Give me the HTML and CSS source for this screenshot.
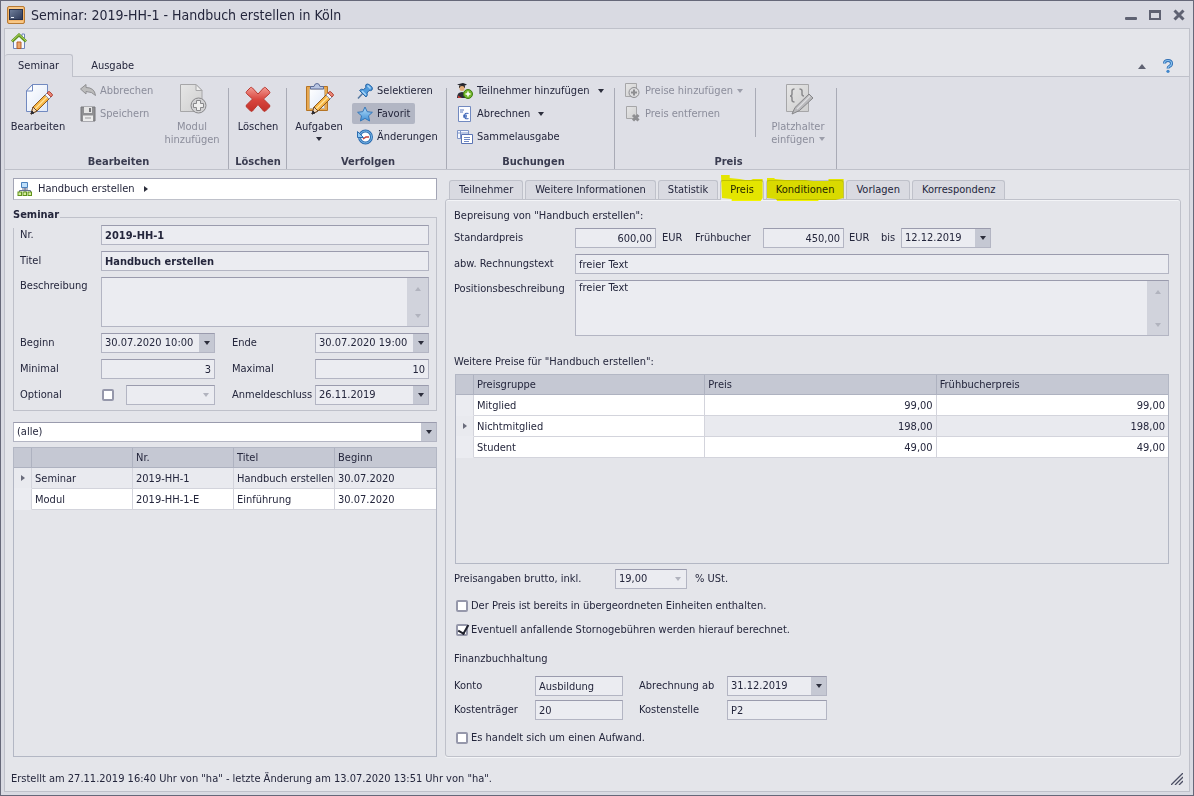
FILE: index.html
```html
<!DOCTYPE html>
<html lang="de">
<head>
<meta charset="utf-8">
<title>Seminar: 2019-HH-1 - Handbuch erstellen in Köln</title>
<link rel="stylesheet" href="styles.css">
</head>
<body>
<svg class="defs" aria-hidden="true">
  <defs>
    <linearGradient id="paper" x1="0" y1="0" x2="1" y2="1"><stop offset="0" stop-color="#fff"/><stop offset="1" stop-color="#dfe8f8"/></linearGradient>
    <linearGradient id="grey" x1="0" y1="0" x2="1" y2="1"><stop offset="0" stop-color="#e6e6e6"/><stop offset="1" stop-color="#cfcfcf"/></linearGradient>
    <linearGradient id="red" x1="0" y1="0" x2="0" y2="1"><stop offset="0" stop-color="#f29a92"/><stop offset=".5" stop-color="#d9473f"/><stop offset="1" stop-color="#c23029"/></linearGradient>
    <linearGradient id="blue" x1="0" y1="0" x2="0" y2="1"><stop offset="0" stop-color="#b5defa"/><stop offset="1" stop-color="#3f8fd6"/></linearGradient>
    <linearGradient id="navy" x1="0" y1="0" x2="1" y2="1"><stop offset="0" stop-color="#71809c"/><stop offset="1" stop-color="#2c3857"/></linearGradient>
    <g id="pencil">
      <path d="M9 31l2-7L25 10l4 4-14 14z" fill="#f6b545" stroke="#8b5a21"/>
      <path d="M13 26L27 12" stroke="#ffe39a" stroke-width="1.500"/>
      <path d="M9 31l2-7 4 4z" fill="#f3d9b8" stroke="#6b4a2a"/>
      <path d="M9 31l1-3 2 2z" fill="#2b2b33" stroke="#2b2b33"/>
      <path d="M23 12l4 4 2-2-4-4z" fill="#f4f6fb" stroke="#7a86a8" stroke-width=".8"/>
      <path d="M25 10l1-1q1-1 2 0l2 2q1 1 0 2l-1 1z" fill="#ea8473" stroke="#b14a3f"/>
    </g>
  </defs>
</svg>
<div class="window">
  <header class="titlebar">
    <svg class="app-icon" viewBox="0 0 18 18" width="18" height="18"><rect x=".5" y=".5" width="17" height="17" rx="1.500" fill="#f4b66a" stroke="#b67a35"/><rect x="2.500" y="3.500" width="13" height="10" fill="url(#navy)" stroke="#26304c"/><path d="M4 11.500h3" stroke="#e8edf8"/><path d="M2 16h14M2 2h14" stroke="#fbd8a4"/></svg>
    <h1>Seminar: 2019-HH-1 - Handbuch erstellen in Köln</h1>
    <div class="win-buttons">
      <button aria-label="Minimieren"><svg viewBox="0 0 12 12" width="12" height="12"><rect x="0" y="8" width="12" height="3" rx="1" fill="#5f6272"/></svg></button>
      <button aria-label="Maximieren"><svg viewBox="0 0 12 12" width="12" height="12"><path d="M0 1h12v10H0zM2 4v5h8V4z" fill="#5f6272" fill-rule="evenodd"/></svg></button>
      <button aria-label="Schließen"><svg viewBox="0 0 12 12" width="12" height="12"><path d="M1.500 1.500l9 9M10.500 1.500l-9 9" stroke="#5f6272" stroke-width="3"/></svg></button>
    </div>
  </header>

  <div class="frame">
    <div class="quickbar">
      <button aria-label="Start"><svg viewBox="0 0 16 16" width="16" height="16"><path d="M11 1h2.500v4H11z" fill="#fff" stroke="#6f84bb"/><path d="M2.500 7v8.500h11V7L8 2z" fill="#f4f8ff" stroke="#6f84bb"/><path d="M6 9h4v6.500H6z" fill="#eca66a" stroke="#b5602a"/><path d="M1 8.500l7-6.500 7 6.500" fill="none" stroke="#5f9423" stroke-width="3"/><path d="M1 8l7-6.500L15 8" fill="none" stroke="#b5d95c"/></svg></button>
    </div>
    <nav class="ribbon-tabs">
      <button class="ribbon-tab active">Seminar</button>
      <button class="ribbon-tab">Ausgabe</button>
      <span class="ribbon-tools">
        <button aria-label="Menüband minimieren"><i class="tri up big"></i></button>
        <button aria-label="Hilfe"><svg viewBox="0 0 12 14" width="12" height="14"><path d="M2.500 4.500q0-3 3.500-3t3.500 3q0 2-2 2.800Q6 8 6 9.500" fill="none" stroke="#2f6fb5" stroke-width="3"/><path d="M2.500 4.500q0-3 3.500-3t3.500 3q0 2-2 2.800Q6 8 6 9.500" fill="none" stroke="#8cc4f0" stroke-width="1.200"/><circle cx="6" cy="12.300" r="1.600" fill="#3f86cb"/></svg></button>
      </span>
    </nav>

    <div class="ribbon">
      <section class="group g-edit">
        <div class="group-items">
          <button class="large"><svg viewBox="0 0 32 32" width="32" height="32"><path d="M10.500 1.500h15v27h-21V8z" fill="url(#paper)" stroke="#7189c0"/><path d="M10.500 1.500V8h-6z" fill="#fff" stroke="#7189c0"/><use href="#pencil"/></svg><span>Bearbeiten</span></button>
          <div class="stack">
            <button class="small" disabled><svg viewBox="0 0 16 16" width="16" height="16"><path d="M.5 6L6 1.500v3q8.500 0 9.500 8Q12 8.500 6 8.500v2.500z" fill="#bdbdbd" stroke="#8f8f92"/></svg><span>Abbrechen</span></button>
            <button class="small" disabled><svg viewBox="0 0 16 16" width="16" height="16"><path d="M1 1h14v14H1z" fill="#8f8f92" stroke="#77777b"/><path d="M4 1h8v6H4z" fill="#e4e4e4"/><path d="M9 2h2v4H9z" fill="#77777b"/><path d="M3 9.500h10V15H3z" fill="#ececec"/><path d="M5 12h6" stroke="#9a9a9d"/></svg><span>Speichern</span></button>
          </div>
          <button class="large" disabled><svg viewBox="0 0 32 32" width="32" height="32"><path d="M4.500 1.500H20l6 6v21H4.500z" fill="url(#grey)" stroke="#a6a6a8"/><path d="M20 1.500v6h6z" fill="#eee" stroke="#a6a6a8"/><circle cx="22.500" cy="22.500" r="7.500" fill="#d2d2d4" stroke="#88888b"/><path d="M20.500 17.500h4v3h3v4h-3v3h-4v-3h-3v-4h3z" fill="#eee" stroke="#88888b"/></svg><span>Modul<br>hinzufügen</span></button>
        </div>
        <h2>Bearbeiten</h2>
      </section>
      <section class="group g-delete">
        <div class="group-items">
          <button class="large"><svg viewBox="0 0 32 32" width="32" height="32"><path d="M4.500 8.500l4-4q1-.5 2 .5L16 11l5.500-6q1-1 2-.5l4 4q.8 1 0 2L21.500 16l6 6q.8 1 0 2l-4 4q-1 .8-2 0L16 21.500 10.500 28q-1 .8-2 0l-4-4q-.8-1 0-2l6-6-6-5.500q-.8-1 0-2z" fill="url(#red)" stroke="#b93830"/></svg><span>Löschen</span></button>
        </div>
        <h2>Löschen</h2>
      </section>
      <section class="group g-track">
        <div class="group-items">
          <button class="large"><svg viewBox="0 0 32 32" width="32" height="32"><path d="M3.500 3.500h21v24h-21z" fill="#e8a850" stroke="#b57424"/><path d="M6.500 6h15v19.500h-15z" fill="url(#paper)" stroke="#c9b79a"/><path d="M7.500 6V3.500H11q.5-3 3-3t3 3h3.500V6z" fill="#b9c6e2" stroke="#5c6d99"/><use href="#pencil"/></svg><span>Aufgaben</span><i class="tri down"></i></button>
          <div class="stack">
            <button class="small"><svg viewBox="0 0 16 16" width="16" height="16"><path d="M6 10l-5 5.500" stroke="#54779f" stroke-width="1.500"/><path d="M9 1.500q1.500-1.500 4.500 1T15 7q-1.500 1-3 .5l-2 2.500q1 2.500-1 4L2.500 7.500q1.500-2 4-1L9 4.500q-.7-1.500 0-3z" fill="#4f9bdd" stroke="#2a66a6"/><path d="M10.500 2.500l3 3M5 8l4 4" stroke="#a9d6f7" stroke-width="1.500"/></svg><span>Selektieren</span></button>
            <button class="small pressed" aria-pressed="true"><svg viewBox="0 0 16 16" width="16" height="16"><path d="M8 1l2.200 4.700 5.200.6-3.900 3.500 1.100 5.200L8 12.400 3.400 15l1.100-5.200L.6 6.300l5.200-.6z" fill="url(#blue)" stroke="#3577b9"/></svg><span>Favorit</span></button>
            <button class="small"><svg viewBox="0 0 16 16" width="16" height="16"><circle cx="8.500" cy="8" r="6" fill="#fff" stroke="#2d6cb0" stroke-width="3"/><circle cx="8.500" cy="8" r="6" fill="none" stroke="#7bbcec"/><path d="M.5 2.500v6h6z" fill="#8fcaf5" stroke="#2d6cb0"/><path d="M6 10l3-2h3" fill="none" stroke="#c4443c" stroke-width="1.500"/></svg><span>Änderungen</span></button>
          </div>
        </div>
        <h2>Verfolgen</h2>
      </section>
      <section class="group g-book">
        <div class="group-items">
          <div class="stack">
            <button class="small"><svg viewBox="0 0 16 16" width="16" height="16"><path d="M0 1.500L6 0l4 1.500L6 3.500z" fill="#22242c"/><path d="M2 2.500h6V5H2z" fill="#3a3430"/><circle cx="5" cy="5.500" r="2.500" fill="#e5ad78"/><path d="M0 15q0-6 5-6t6 6z" fill="#2c2e38"/><path d="M1 12.500l4 2.500H1z" fill="#c63d35"/><circle cx="11" cy="11" r="4.500" fill="#76b82e" stroke="#3f7d12"/><path d="M11 8.500v5M8.500 11h5" stroke="#fff" stroke-width="1.500"/></svg><span>Teilnehmer hinzufügen</span><i class="tri down spaced"></i></button>
            <button class="small"><svg viewBox="0 0 16 16" width="16" height="16"><path d="M1.500.5h12v15h-12z" fill="#fbfcff" stroke="#7189c0"/><path d="M3 4h4M3 6h3" stroke="#5976bb"/><path d="M11.500 7.500q-4-1.200-4 2.500t4 2.500M6 9.300h4M6 10.900h4" fill="none" stroke="#3e66b8" stroke-width="1.100"/></svg><span>Abrechnen</span><i class="tri down spaced"></i></button>
            <button class="small"><svg viewBox="0 0 16 16" width="16" height="16"><path d="M.5 1.500h11v8H.5z" fill="#f5f8ff" stroke="#7f95c8"/><path d="M.5 4h11M3.500 1.500v8" stroke="#7f95c8"/><path d="M4.500 5.500h11v9h-11z" fill="#fff" stroke="#5b74b4"/><path d="M7 8.500h6M7 10.500h6M7 12.500h5" stroke="#6f88c4"/></svg><span>Sammelausgabe</span></button>
          </div>
        </div>
        <h2>Buchungen</h2>
      </section>
      <section class="group g-price">
        <div class="group-items">
          <div class="stack">
            <button class="small" disabled><svg viewBox="0 0 16 16" width="16" height="16"><path d="M.5.5h11v13H.5z" fill="url(#grey)" stroke="#a6a6a8"/><circle cx="9" cy="9.500" r="5" fill="#dcdcde" stroke="#8e8e91"/><path d="M9 6.500v6M6 9.500h6" stroke="#8e8e91" stroke-width="2"/></svg><span>Preise hinzufügen</span><i class="tri down"></i></button>
            <button class="small" disabled><svg viewBox="0 0 16 16" width="16" height="16"><path d="M1.500.5h10v12h-10z" fill="url(#grey)" stroke="#a6a6a8"/><path d="M8 9l5.500 5.500M13.500 9L8 14.500" stroke="#8e8e91" stroke-width="3"/></svg><span>Preis entfernen</span></button>
          </div>
          <span class="divider"></span>
          <button class="large" disabled><svg viewBox="0 0 32 32" width="32" height="32"><path d="M4.500 1.500h22v27h-22z" fill="url(#grey)" stroke="#a6a6a8"/><path d="M12.500 6q-2.500 0-2.500 2v3q0 2-2 2 2 0 2 2v2q0 2 2.500 2M17.500 6Q20 6 20 8v3q0 2 2 2" fill="none" stroke="#8a8a8d" stroke-width="1.500"/><path d="M10 31l3-6.500L27 11l4 4-13.500 12.500z" fill="#b9b9bc" stroke="#858588"/><path d="M15 26L28 13" stroke="#dedee0" stroke-width="1.500"/></svg><span>Platzhalter<br>einfügen <i class="tri down"></i></span></button>
        </div>
        <h2>Preis</h2>
      </section>
    </div>

    <main class="content">
      <div class="left">
        <nav class="crumb">
          <svg viewBox="0 0 16 16" width="16" height="16"><path d="M8 6v5M2.500 12V9.500h11V12" fill="none" stroke="#66718f"/><path d="M4.500 1.500h6v5h-6z" fill="#bfe0fb" stroke="#4c82bd"/><path d="M5 8h6" stroke="#66718f"/><g fill="#d5ee9a" stroke="#5f921c"><rect x="1" y="11" width="3.500" height="3.500"/><rect x="6" y="11" width="3.500" height="3.500"/><rect x="11" y="11" width="3.500" height="3.500"/></g></svg>
          <a href="#">Handbuch erstellen</a><i class="tri right"></i>
        </nav>

        <fieldset class="seminar">
          <legend>Seminar</legend>
          <div class="form">
            <label for="nr">Nr.</label><input id="nr" class="box wide bold" value="2019-HH-1" readonly>
            <label for="titel">Titel</label><input id="titel" class="box wide bold" value="Handbuch erstellen" readonly>
            <label for="desc" class="top">Beschreibung</label>
            <div class="box memo wide"><textarea id="desc" readonly></textarea><span class="scroll"><i class="tri up"></i><i class="tri down"></i></span></div>
            <label for="beg">Beginn</label><div class="box pick"><input id="beg" value="30.07.2020 10:00"><button aria-label="Beginn wählen"><i class="tri down"></i></button></div>
            <label for="end" class="second">Ende</label><div class="box pick"><input id="end" value="30.07.2020 19:00"><button aria-label="Ende wählen"><i class="tri down"></i></button></div>
            <label for="min">Minimal</label><input id="min" class="box num" value="3" readonly>
            <label for="max" class="second">Maximal</label><input id="max" class="box num" value="10" readonly>
            <label for="opt">Optional</label><div class="opt"><input type="checkbox" id="opt"><div class="box pick off"><select aria-label="Option" disabled><option></option></select><i class="tri down"></i></div></div>
            <label for="close" class="second">Anmeldeschluss</label><div class="box pick"><input id="close" value="26.11.2019"><button aria-label="Anmeldeschluss wählen"><i class="tri down"></i></button></div>
          </div>
        </fieldset>

        <div class="box pick white filter"><select aria-label="Filter"><option>(alle)</option></select><span class="cap"><i class="tri down"></i></span></div>

        <div class="grid">
          <table>
            <colgroup><col class="mark"><col><col><col><col></colgroup>
            <thead><tr><th></th><th></th><th>Nr.</th><th>Titel</th><th>Beginn</th></tr></thead>
            <tbody>
              <tr class="current"><td><i class="tri right"></i></td><td>Seminar</td><td>2019-HH-1</td><td>Handbuch erstellen</td><td>30.07.2020</td></tr>
              <tr><td></td><td>Modul</td><td>2019-HH-1-E</td><td>Einführung</td><td>30.07.2020</td></tr>
            </tbody>
          </table>
        </div>
      </div>

      <div class="right">
        <div class="tabs" role="tablist">
          <button role="tab">Teilnehmer</button><button role="tab">Weitere Informationen</button><button role="tab">Statistik</button><button role="tab" class="active" aria-selected="true">Preis<svg class="marker" viewBox="0 0 43 26" preserveAspectRatio="none"><path d="M0 0h9v3l10 1 6 1h6l2-1h10v19l-2 3H11v-2l-10-1z"/></svg></button><button role="tab">Konditionen<svg class="marker" viewBox="0 0 76 26" preserveAspectRatio="none"><path d="M0 3h7l1 1 10 1h20l8 1h15V4h15v19l-8 2H51v1H10l-1-2-9-1z"/></svg></button><button role="tab">Vorlagen</button><button role="tab">Korrespondenz</button>
        </div>
        <section class="panel">
          <p class="line">Bepreisung von "Handbuch erstellen":</p>
          <div class="pform">
            <label for="std">Standardpreis</label>
            <div class="prices"><input id="std" class="box num" value="600,00"><span class="cur">EUR</span><label for="early" class="early">Frühbucher</label><input id="early" class="box num" value="450,00"><span class="cur narrow">EUR</span><label for="until" class="until">bis</label><div class="box pick date"><input id="until" value="12.12.2019"><button aria-label="Datum wählen"><i class="tri down"></i></button></div></div>
            <label for="inv">abw. Rechnungstext</label><input id="inv" class="box" value="freier Text">
            <label for="pos" class="top">Positionsbeschreibung</label>
            <div class="box memo tall"><textarea id="pos">freier Text</textarea><span class="scroll"><i class="tri up"></i><i class="tri down"></i></span></div>
          </div>
          <p class="line further">Weitere Preise für "Handbuch erstellen":</p>
          <div class="grid">
            <table>
              <colgroup><col class="mark"><col><col><col></colgroup>
              <thead><tr><th></th><th>Preisgruppe</th><th>Preis</th><th>Frühbucherpreis</th></tr></thead>
              <tbody>
                <tr><td></td><td>Mitglied</td><td class="n">99,00</td><td class="n">99,00</td></tr>
                <tr class="current"><td><i class="tri right"></i></td><td class="focus">Nichtmitglied</td><td class="n">198,00</td><td class="n">198,00</td></tr>
                <tr><td></td><td>Student</td><td class="n">49,00</td><td class="n">49,00</td></tr>
              </tbody>
            </table>
          </div>
          <div class="vat"><label for="vat">Preisangaben brutto, inkl.</label><div class="box pick off"><select id="vat" disabled><option>19,00</option></select><i class="tri down"></i></div><span>% USt.</span></div>
          <label class="check"><input type="checkbox"><span>Der Preis ist bereits in übergeordneten Einheiten enthalten.</span></label>
          <label class="check"><input type="checkbox" checked><span>Eventuell anfallende Stornogebühren werden hierauf berechnet.</span></label>
          <p class="line finance">Finanzbuchhaltung</p>
          <div class="fform">
            <label for="konto">Konto</label><input id="konto" class="box" value="Ausbildung">
            <label for="ab" class="second">Abrechnung ab</label><div class="box pick"><input id="ab" value="31.12.2019"><button aria-label="Datum wählen"><i class="tri down"></i></button></div>
            <label for="kt">Kostenträger</label><input id="kt" class="box" value="20">
            <label for="ks" class="second">Kostenstelle</label><input id="ks" class="box" value="P2">
          </div>
          <label class="check last"><input type="checkbox"><span>Es handelt sich um einen Aufwand.</span></label>
        </section>
      </div>
    </main>

    <footer class="status">
      <span>Erstellt am 27.11.2019 16:40 Uhr von "ha" - letzte Änderung am 13.07.2020 13:51 Uhr von "ha".</span>
      <svg viewBox="0 0 12 12" width="12" height="12"><path d="M0 12L12 0M4 12l8-8M8 12l4-4" stroke="#4b4e63" stroke-width="1.300"/></svg>
    </footer>
  </div>
</div>
</body>
</html>
```

FILE: styles.css
```css
:root {
  --ink: #24263c;
  --bg: #e4e5ea;
  --ribbon: #dedfe6;
  --line: #bfc1ca;
  --box: #ebecf1;
  --head: #c5c8d3;
  --dim: #8b8d9b;
}

* { box-sizing: border-box; }

body {
  margin: 0;
  color: var(--ink);
  font: 11px/14px "DejaVu Sans Condensed", "Noto Sans", sans-serif;
}

h1, h2, p, fieldset, legend { margin: 0; padding: 0; }
button, input, select, textarea { font: inherit; color: inherit; margin: 0; }
button { border: 0; padding: 0; background: none; }
svg { display: block; flex: none; }
.defs { position: absolute; width: 0; height: 0; }

.window {
  display: flex;
  flex-direction: column;
  min-height: 100vh;
  padding: 0 3px 3px;
  border: 1px solid #666879;
  background: #d9dae2;
}

.titlebar {
  display: flex;
  align-items: center;
  gap: 6px;
  height: 27px;
  padding: 0 5px 0 3px;
}
.titlebar h1 { flex: 1; font-size: 14px; line-height: 20px; font-weight: normal; }
.win-buttons { display: flex; gap: 12px; }

.frame {
  flex: 1;
  display: flex;
  flex-direction: column;
  border: 1px solid var(--line);
  background: var(--bg);
}

/* small arrow glyphs */
.tri { display: inline-block; flex: none; width: 0; height: 0; border: 0 solid transparent; color: #2c2e3c; }
.tri.down { border-width: 4px 3px 0; border-top-color: currentColor; }
.tri.up { border-width: 0 3px 4px; border-bottom-color: currentColor; }
.tri.up.big { border-width: 0 4px 5px; color: #5f6272; }
.tri.right { border-width: 3px 0 3px 4px; border-left-color: currentColor; }

/* ribbon */
.quickbar { height: 25px; padding: 4px 6px 0; }
.ribbon-tabs { display: flex; height: 23px; background: linear-gradient(var(--line), var(--line)) bottom / 100% 1px no-repeat; }
.ribbon-tab { padding: 0 13px; border: 1px solid transparent; border-bottom: 0; border-radius: 3px 3px 0 0; }
.ribbon-tab.active { border-color: var(--line); border-left: 0; background: var(--ribbon); margin-right: 4px; }
.ribbon-tools { margin-left: auto; display: flex; align-items: center; gap: 16px; padding-right: 15px; }
.ribbon { display: flex; height: 93px; background: var(--ribbon); border-bottom: 1px solid var(--line); }
.group {
  display: flex;
  flex-direction: column;
  justify-content: space-between;
  background: linear-gradient(#a9abb6, #a9abb6) right 11px / 1px 100% no-repeat;
}
.group h2 { font-size: 11px; line-height: 15px; text-align: center; color: #3a3c50; }
.group-items { display: flex; justify-content: flex-start; padding-top: 1px; }
.g-edit { width: 224px; padding-left: 3px; }
.g-edit .stack { width: 87px; margin-left: 7px; }
.g-delete { width: 58px; }
.g-delete .group-items { justify-content: center; }
.g-track { width: 160px; padding-left: 2px; }
.g-track .stack { margin-left: 3px; }
.g-book { width: 168px; padding-left: 5px; }
.g-price { width: 222px; padding-left: 5px; }
.g-price .stack { width: 135px; }
.divider { width: 1px; height: 49px; margin: 10px 12px 0 0; background: #a9abb6; }
.large { display: flex; flex-direction: column; align-items: center; width: 60px; padding-top: 5px; line-height: 13px; white-space: nowrap; }
.large svg { margin-bottom: 5px; }
.large > .tri { margin-top: 4px; }
.large span .tri { margin: 0 0 2px 1px; }
.stack { display: flex; flex-direction: column; align-items: flex-start; gap: 2px; padding-top: 2px; }
.small { display: flex; align-items: center; gap: 4px; height: 21px; padding: 0 5px; border-radius: 2px; white-space: nowrap; }
.small.pressed { background: #b2b6c4; }
.small .spaced { margin-left: 4px; }
.ribbon button:disabled { color: var(--dim); }
.ribbon button:disabled .tri { color: #9c9eaa; }

/* content */
.content {
  flex: 1;
  display: grid;
  grid-template-columns: minmax(0, 424fr) minmax(0, 736fr);
  gap: 8px;
  padding: 8px 8px 0;
}
.left, .right { display: flex; flex-direction: column; }

.crumb { display: flex; align-items: center; height: 22px; padding: 0 3px; border: 1px solid #a3a5b5; border-bottom-color: var(--line); background: #fff; }
.crumb a { margin: 0 9px 0 5px; color: inherit; text-decoration: none; }

.seminar { min-width: 0; border: 1px solid var(--line); margin-top: 7px; padding: 0 7px 5px 6px; }
.seminar legend { margin-left: -7px; padding: 0 1px 6px 0; font-weight: bold; line-height: 15px; }

.form { display: grid; grid-template-columns: 81px 1fr 100px 1fr; row-gap: 6px; align-items: center; margin-top: -3px; }
.wide { grid-column: 2 / -1; }
.form .second { padding-left: 17px; }
.top { align-self: start; padding-top: 2px; }

.box {
  width: 100%;
  min-width: 0;
  height: 20px;
  padding: 0 3px;
  border: 1px solid #b3b5c3;
  border-top-color: #9a9bad;
  border-radius: 0;
  background: var(--box);
}
.bold { font-weight: bold; }
.num { text-align: right; }
.memo { display: flex; height: 50px; padding: 0; }
.memo.tall { height: 56px; }
.memo textarea { flex: 1; min-width: 0; padding: 0 3px; border: 0; background: none; resize: none; }
.scroll { display: flex; flex-direction: column; align-items: center; justify-content: space-between; width: 21px; padding: 9px 0 8px; background: #d1d3dc; }
.scroll .tri { color: #b1b3be; }
.pick { display: flex; padding: 0; }
.pick input, .pick select { flex: 1; width: 100%; min-width: 0; padding: 0 3px; border: 0; background: none; appearance: none; opacity: 1; }
.pick button, .cap { display: flex; flex: none; align-items: center; justify-content: center; width: 15px; background: var(--head); }
.pick.off .tri { align-self: center; margin-right: 5px; color: #b1b3be; }
.pick.white { background: #fff; }
.opt { display: flex; align-items: center; justify-content: space-between; padding-left: 1px; }
.opt .box { width: 89px; }
.filter { margin-top: 11px; }

input[type="checkbox"] {
  flex: none;
  appearance: none;
  width: 12px;
  height: 12px;
  border: 2px solid #9698ab;
  border-radius: 2px;
  background: #fff;
  position: relative;
}
input[type="checkbox"]:checked::after {
  content: "";
  position: absolute;
  left: 2px;
  top: -3px;
  width: 5px;
  height: 9px;
  border: solid #20222e;
  border-width: 0 2px 2px 0;
  transform: rotate(30deg);
}

/* data grids */
.grid { border: 1px solid #b3b7c4; }
.left .grid { flex: 1; margin-top: 5px; }
table { width: 100%; border-collapse: separate; border-spacing: 0; table-layout: fixed; }
.mark { width: 18px; }
th, td { height: 21px; padding: 1px 3px 0; border: 0 solid #d3d4dc; border-width: 0 1px 1px 0; white-space: nowrap; font-weight: normal; text-align: left; background: #fff; }
th { height: 20px; background: var(--head); border-color: #aeb2c0; }
th:last-child, td:last-child { border-right: 0; }
td:first-child { padding: 0 0 0 7px; background: var(--box); border-bottom-color: var(--box); }
td .tri { display: block; color: #6a6c7c; }
.current td { background: #e9eaef; }
.current .focus { background: #fff; }
td.n { text-align: right; }

/* tabs */
.tabs { display: flex; gap: 2px; padding: 2px 4px 0; }
.tabs button { position: relative; height: 19px; padding: 0 9px; border: 1px solid var(--line); border-bottom: 0; border-radius: 3px 3px 0 0; background: #d9dae1; white-space: nowrap; }
.tabs .active { height: 20px; margin-bottom: -1px; padding-bottom: 1px; background: var(--bg); }
.marker { position: absolute; left: 0; top: -6px; width: 100%; height: 26px; fill: #ff0; mix-blend-mode: multiply; pointer-events: none; overflow: visible; }

.panel { flex: 1; padding: 9px 11px 0 8px; border: 1px solid var(--line); border-radius: 3px; box-shadow: inset 0 1px #f3f4f7, 0 1px #f3f4f7; }
.line { line-height: 14px; }
.pform { display: grid; grid-template-columns: 121px 1fr; row-gap: 6px; align-items: center; margin-top: 5px; }
.prices { display: flex; align-items: center; }
.prices .num { width: 81px; }
.cur { width: 39px; padding-left: 6px; }
.cur.narrow { width: 37px; padding-left: 5px; }
.early { width: 68px; }
.until { width: 20px; }
.prices .date { width: 90px; }
.further { margin: 19px 0 5px; }
.panel .grid { height: 190px; margin-left: 1px; }
.vat { display: flex; align-items: center; margin-top: 5px; }
.vat label { width: 161px; }
.vat .box { width: 72px; margin-right: 8px; }
.check { display: flex; align-items: center; gap: 3px; width: max-content; height: 14px; margin: 10px 0 0 2px; }
.finance { margin: 15px 0 10px; }
.fform { display: grid; grid-template-columns: 81px 88px 104px 100px; row-gap: 4px; align-items: center; }
.fform .second { padding-left: 16px; }
.check.last { margin-top: 11px; margin-bottom: 11px; }

.status { display: flex; align-items: center; justify-content: space-between; height: 34px; padding: 10px 6px 0; }
```
